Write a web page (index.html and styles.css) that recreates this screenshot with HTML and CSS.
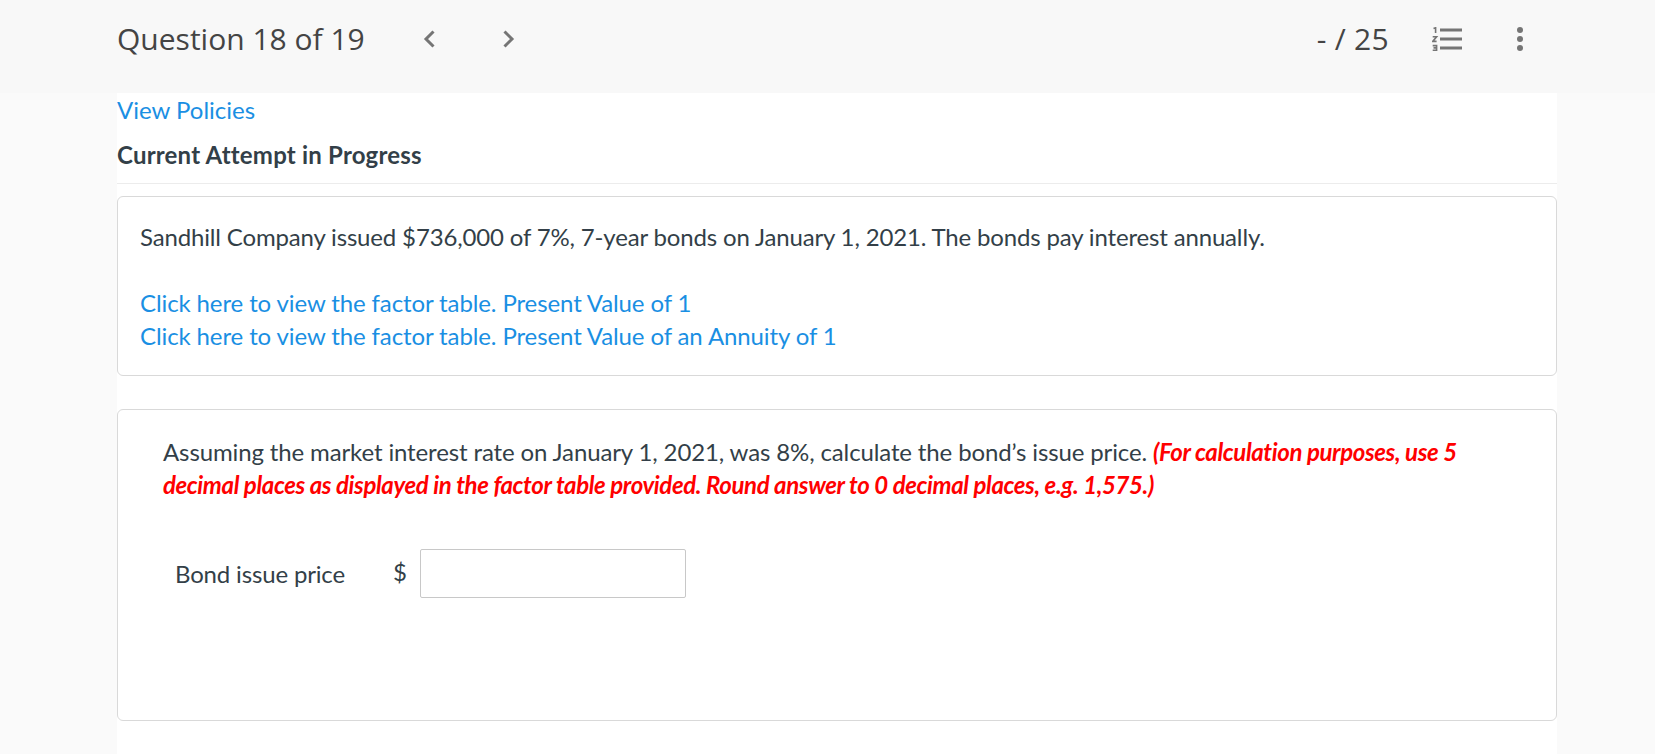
FILE: index.html
```html
<!DOCTYPE html>
<html lang="en">
<head>
    <meta charset="UTF-8">
    <title>Question 18 of 19</title>
    <link rel="stylesheet" href="styles.css">
</head>
<body>
    <header class="topbar">
        <div class="topbar-left">
            <h1>Question 18 of 19</h1>
            <a class="nav-arrow" href="#prev">
                <svg width="14" height="20" viewBox="0 0 14 20"><path d="M11.5 2.5 L4 10 L11.5 17.5" fill="none" stroke="#757575" stroke-width="3"/></svg>
            </a>
            <a class="nav-arrow" href="#next">
                <svg width="14" height="20" viewBox="0 0 14 20"><path d="M2.5 2.5 L10 10 L2.5 17.5" fill="none" stroke="#757575" stroke-width="3"/></svg>
            </a>
        </div>
        <div class="topbar-right">
            <span class="score">- / 25</span>
            <svg class="list-icon" width="30" height="24" viewBox="0 0 30 24">
                <g fill="none" stroke="#757575" stroke-width="1.6">
                    <path d="M1.5 1.6 L3.6 .8 V6"/>
                    <path d="M.7 9.8 H4.6 L.7 14.4 H4.6"/>
                    <path d="M.7 18.6 H4.6 V23.2 H.7 M1.5 20.9 H4.6"/>
                </g>
                <g fill="#757575">
                    <rect x="8" y="1.5" width="22" height="3"/>
                    <rect x="8" y="10.5" width="22" height="3"/>
                    <rect x="8" y="19.5" width="22" height="3"/>
                </g>
            </svg>
            <svg class="dots-icon" width="6" height="24" viewBox="0 0 6 24">
                <g fill="#757575">
                    <circle cx="3" cy="3" r="3"/>
                    <circle cx="3" cy="12" r="3"/>
                    <circle cx="3" cy="21" r="3"/>
                </g>
            </svg>
        </div>
    </header>

    <main>
        <a class="policies" href="#policies">View Policies</a>
        <div class="attempt">Current Attempt in Progress</div>

        <!-- question text -->
        <div class="card card-intro">
            <p>Sandhill Company issued $736,000 of 7%, 7-year bonds on January 1, 2021. The bonds pay interest annually.</p>
            <p class="links">
                <a href="#pv1">Click here to view the factor table. Present Value of 1</a><br>
                <a href="#pva1">Click here to view the factor table. Present Value of an Annuity of 1</a>
            </p>
        </div>

        <!-- answer part -->
        <div class="card card-part">
            <p class="part-text">Assuming the market interest rate on January 1, 2021, was 8%, calculate the bond’s issue price. <em class="note">(For calculation purposes, use 5 decimal places as displayed in the factor table provided. Round answer to 0 decimal places, e.g. 1,575.)</em></p>
            <div class="answer-row">
                <label for="price">Bond issue price</label>
                <span class="currency">$</span>
                <input type="text" id="price">
            </div>
        </div>
    </main>
</body>
</html>
```

FILE: styles.css
```css
html, body {
    height: 100%;
}

body {
    font-family: "Lato", sans-serif;
    font-size: 24px;
    line-height: 33px;
    letter-spacing: -0.16px;
    color: #333f48;
    background-color: #fafafa;
    margin: 0;
    overflow: hidden;
}

a {
    color: #1a8fe3;
    text-decoration: none;
}

.topbar {
    height: 93px;
    box-sizing: border-box;
    background-color: #f8f8f8;
    padding: 0 117px 15px;
    display: flex;
    justify-content: space-between;
    align-items: center;
    font-family: "Open Sans", sans-serif;
    letter-spacing: 0;
    color: #444;
}

.topbar-left, .topbar-right {
    display: flex;
    align-items: center;
}

h1 {
    font-size: 30px;
    font-weight: 400;
    margin: 0 57px 2px 0;
}

.nav-arrow {
    display: flex;
    margin-right: 66px;
}

.score {
    font-size: 30px;
    letter-spacing: 0.3px;
    margin: 0 43px 2px 0;
}

.list-icon {
    margin-right: 55px;
}

.dots-icon {
    margin-right: 15px;
}

main {
    width: 1440px;
    height: 661px;
    margin-left: 117px;
    background-color: #fff;
    overflow: hidden;
}

.policies {
    display: block;
    line-height: 33px;
    letter-spacing: 0;
}

.attempt {
    font-weight: 700;
    letter-spacing: 0.2px;
    margin-top: 12px;
    padding-bottom: 12px;
    border-bottom: 1px solid #ececec;
}

.card {
    box-sizing: border-box;
    border: 1px solid #d9d9d9;
    border-radius: 6px;
    background-color: #fff;
}

.card p {
    margin: 0;
}

.card-intro {
    height: 180px;
    margin-top: 12px;
    padding: 23px 22px;
}

.links {
    padding-top: 33px;
    letter-spacing: -0.11px;
}

.card-part {
    height: 312px;
    margin-top: 33px;
    padding: 25px 45px;
}

.part-text {
    letter-spacing: -0.13px;
}

.note {
    color: #f00;
    font-weight: 700;
    font-style: italic;
    letter-spacing: -0.38px;
}

.answer-row {
    display: flex;
    align-items: center;
    margin-top: 33px;
    padding-top: 15px;
    padding-left: 12px;
}

label {
    width: 218px;
}

.currency {
    width: 27px;
    margin-top: -4px;
}

input[type="text"] {
    width: 266px;
    height: 49px;
    box-sizing: border-box;
    border: 1px solid #c8c8c8;
    border-radius: 2px;
    background-color: #fff;
    padding: 0 8px;
    font: inherit;
}
```
